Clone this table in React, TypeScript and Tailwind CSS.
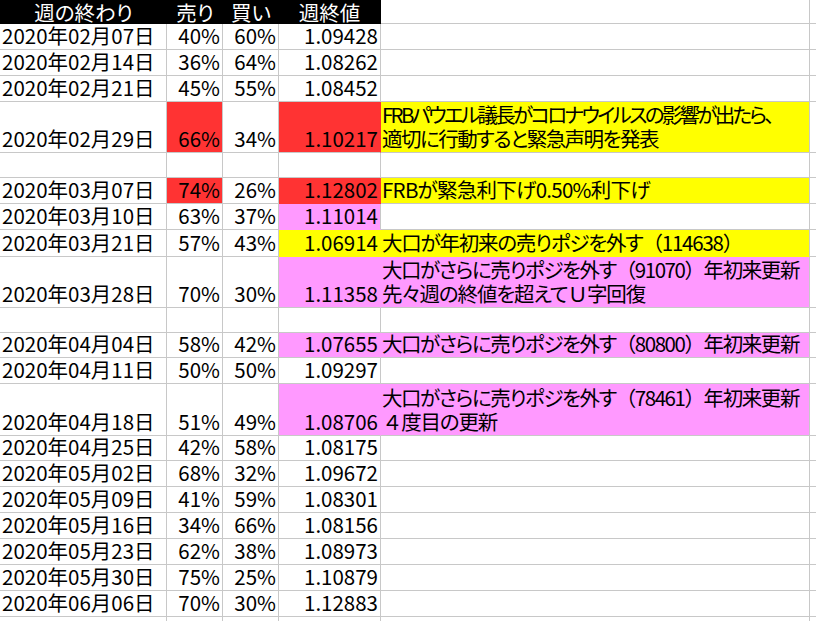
import React, { useLayoutEffect, useRef, useState } from "react";

const RED = "#ff3333";
const YEL = "#ffff00";
const PNK = "#ff99ff";
const GRID = "#c8c8c8";

type Note = { t: string; w: number };
type Row = {
  d?: string;
  s?: string;
  b?: string;
  v?: string;
  note?: Note[];
  fills: (string | null)[];
  h: number;
};

const N = [null, null, null, null, null];

const rows: Row[] = [
  { d: "2020年02月07日", s: "40%", b: "60%", v: "1.09428", fills: N, h: 26 },
  { d: "2020年02月14日", s: "36%", b: "64%", v: "1.08262", fills: N, h: 26 },
  { d: "2020年02月21日", s: "45%", b: "55%", v: "1.08452", fills: N, h: 26 },
  {
    d: "2020年02月29日", s: "66%", b: "34%", v: "1.10217",
    note: [
      { t: "FRBパウエル議長がコロナウイルスの影響が出たら、", w: 390 },
      { t: "適切に行動すると緊急声明を発表", w: 276 },
    ],
    fills: [null, RED, null, RED, YEL], h: 51,
  },
  { fills: N, h: 25 },
  {
    d: "2020年03月07日", s: "74%", b: "26%", v: "1.12802",
    note: [{ t: "FRBが緊急利下げ0.50%利下げ", w: 268 }],
    fills: [null, RED, null, RED, YEL], h: 26,
  },
  { d: "2020年03月10日", s: "63%", b: "37%", v: "1.11014", fills: [null, null, null, PNK, null], h: 26 },
  {
    d: "2020年03月21日", s: "57%", b: "43%", v: "1.06914",
    note: [{ t: "大口が年初来の売りポジを外す（114638）", w: 360 }],
    fills: [null, null, null, YEL, YEL], h: 27,
  },
  {
    d: "2020年03月28日", s: "70%", b: "30%", v: "1.11358",
    note: [
      { t: "大口がさらに売りポジを外す（91070）年初来更新", w: 417 },
      { t: "先々週の終値を超えてＵ字回復", w: 263 },
    ],
    fills: [null, null, null, PNK, PNK], h: 51,
  },
  { fills: N, h: 25 },
  {
    d: "2020年04月04日", s: "58%", b: "42%", v: "1.07655",
    note: [{ t: "大口がさらに売りポジを外す（80800）年初来更新", w: 417 }],
    fills: [null, null, null, PNK, PNK], h: 25,
  },
  { d: "2020年04月11日", s: "50%", b: "50%", v: "1.09297", fills: N, h: 26 },
  {
    d: "2020年04月18日", s: "51%", b: "49%", v: "1.08706",
    note: [
      { t: "大口がさらに売りポジを外す（78461）年初来更新", w: 417 },
      { t: "４度目の更新", w: 115 },
    ],
    fills: [null, null, null, PNK, PNK], h: 52,
  },
  { d: "2020年04月25日", s: "42%", b: "58%", v: "1.08175", fills: N, h: 25 },
  { d: "2020年05月02日", s: "68%", b: "32%", v: "1.09672", fills: N, h: 26 },
  { d: "2020年05月09日", s: "41%", b: "59%", v: "1.08301", fills: N, h: 26 },
  { d: "2020年05月16日", s: "34%", b: "66%", v: "1.08156", fills: N, h: 26 },
  { d: "2020年05月23日", s: "62%", b: "38%", v: "1.08973", fills: N, h: 26 },
  { d: "2020年05月30日", s: "75%", b: "25%", v: "1.10879", fills: N, h: 26 },
  { d: "2020年06月06日", s: "70%", b: "30%", v: "1.12883", fills: N, h: 26 },
  { fills: N, h: 26 },
];

const widths = ["w-[167px]", "w-[56px]", "w-[56px]", "w-[102px]", "w-[429px]"];

const FULL = new Set(["（", "）", "Ｕ", "４"]);

function FitLine({ text, target }: { text: string; target: number }) {
  const ref = useRef<HTMLSpanElement>(null);
  const [ls, setLs] = useState(0);
  const lsRef = useRef(0);
  useLayoutEffect(() => {
    const measure = () => {
      const el = ref.current;
      if (!el) return;
      const n = Array.from(text).length;
      const w = el.getBoundingClientRect().width - lsRef.current * n;
      const next = (target - w) / n;
      lsRef.current = next;
      setLs(next);
    };
    measure();
    if (document.fonts && document.fonts.ready) {
      document.fonts.ready.then(measure);
    }
  }, [text, target]);

  const parts: React.ReactNode[] = [];
  let buf = "";
  Array.from(text).forEach((ch, i) => {
    if (FULL.has(ch)) {
      if (buf) parts.push(<React.Fragment key={`b${i}`}>{buf}</React.Fragment>);
      buf = "";
      parts.push(
        <span key={`p${i}`} className="[font-feature-settings:normal]">
          {ch}
        </span>
      );
    } else {
      buf += ch;
    }
  });
  if (buf) parts.push(<React.Fragment key="end">{buf}</React.Fragment>);

  return (
    <span ref={ref} className="block w-max whitespace-nowrap" style={{ letterSpacing: `${ls}px` }}>
      {parts}
    </span>
  );
}

function Cell({
  wClass,
  fill,
  rightColor,
  bottomColor,
  align,
  children,
  extra,
}: {
  wClass: string;
  fill: string | null;
  rightColor: string;
  bottomColor: string;
  align: "left" | "right" | "note";
  children?: React.ReactNode;
  extra?: string;
}) {
  const justify =
    align === "left" ? "justify-start pl-[2px]" : align === "right" ? "justify-end pr-[2px]" : "justify-start pl-[1px]";
  return (
    <div
      className={`${wClass} shrink-0 h-full border-r border-b flex items-end pb-[2px] ${justify} overflow-visible whitespace-nowrap ${extra ?? ""}`}
      style={{ backgroundColor: fill ?? "#ffffff", borderRightColor: rightColor, borderBottomColor: bottomColor }}
    >
      {children}
    </div>
  );
}

export default function App() {
  return (
    <div className="w-[816px] h-[621px] overflow-hidden bg-white text-black font-['Noto_Sans_CJK_JP',sans-serif] text-[20.5px] leading-[24px]">
      {/* header */}
      <div className="flex h-[24px] text-white [font-feature-settings:'palt'] leading-[23px]">
        <div className="w-[167px] shrink-0 h-full bg-black flex items-center justify-center">週の終わり</div>
        <div className="w-[56px] shrink-0 h-full bg-black flex items-center justify-center">売り</div>
        <div className="w-[56px] shrink-0 h-full bg-black flex items-center justify-center">買い</div>
        <div className="w-[102px] shrink-0 h-full bg-black flex items-center justify-center border-r border-black">週終値</div>
        <div className="w-[429px] shrink-0 h-full bg-white border-r border-b border-[#c8c8c8]" />
        <div className="flex-1 h-full bg-white border-b border-[#c8c8c8]" />
      </div>
      {rows.map((r, i) => {
        const next = rows[i + 1];
        const rc = (c: number) => {
          const f = r.fills[c];
          const nf = c < 4 ? r.fills[c + 1] : null;
          return f && nf ? f : GRID;
        };
        const bc = (c: number) => {
          const f = r.fills[c];
          const nf = next ? next.fills[c] : null;
          return f && nf ? f : GRID;
        };
        return (
          <div key={i} className="flex" style={{ height: r.h }}>
            <Cell wClass={widths[0]} fill={r.fills[0]} rightColor={rc(0)} bottomColor={bc(0)} align="left">
              {r.d}
            </Cell>
            <Cell wClass={widths[1]} fill={r.fills[1]} rightColor={rc(1)} bottomColor={bc(1)} align="right">
              {r.s}
            </Cell>
            <Cell wClass={widths[2]} fill={r.fills[2]} rightColor={rc(2)} bottomColor={bc(2)} align="right">
              {r.b}
            </Cell>
            <Cell wClass={widths[3]} fill={r.fills[3]} rightColor={rc(3)} bottomColor={bc(3)} align="right">
              {r.v}
            </Cell>
            <Cell
              wClass={widths[4]}
              fill={r.fills[4]}
              rightColor={GRID}
              bottomColor={bc(4)}
              align="note"
              extra="[font-feature-settings:'palt']"
            >
              {r.note ? (
                <div className="flex flex-col items-start">
                  {r.note.map((l, k) => (
                    <FitLine key={k} text={l.t} target={l.w} />
                  ))}
                </div>
              ) : null}
            </Cell>
            <div className="flex-1 h-full bg-white border-b border-[#c8c8c8]" />
          </div>
        );
      })}
    </div>
  );
}
